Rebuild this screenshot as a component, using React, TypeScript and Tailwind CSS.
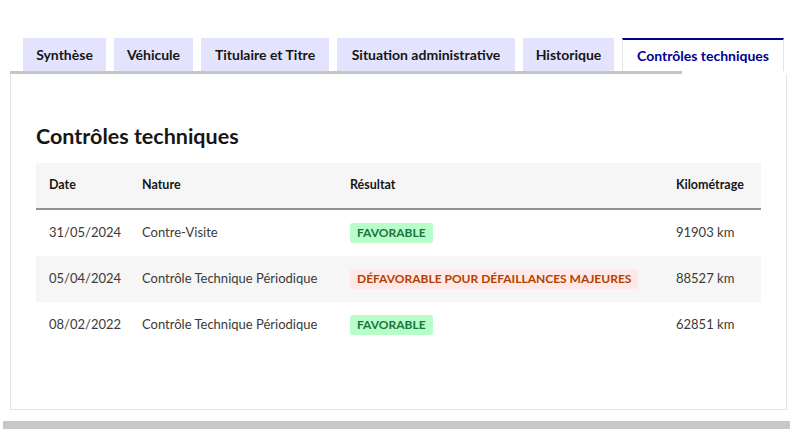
import React from 'react';

// tab labels with their fixed widths
const TABS = [
  { label: 'Synthèse', w: 'w-[83px]' },
  { label: 'Véhicule', w: 'w-[79px]' },
  { label: 'Titulaire et Titre', w: 'w-[128px]' },
  { label: 'Situation administrative', w: 'w-[178px]' },
  { label: 'Historique', w: 'w-[91px]' },
  { label: 'Contrôles techniques', w: 'w-[162px]' },
];

type Ct = { date: string; nature: string; result: string; ok: boolean; km: string };

const CONTROLES: Ct[] = [
  { date: '31/05/2024', nature: 'Contre-Visite', result: 'FAVORABLE', ok: true, km: '91903 km' },
  { date: '05/04/2024', nature: 'Contrôle Technique Périodique', result: 'DÉFAVORABLE POUR DÉFAILLANCES MAJEURES', ok: false, km: '88527 km' },
  { date: '08/02/2022', nature: 'Contrôle Technique Périodique', result: 'FAVORABLE', ok: true, km: '62851 km' },
];

const COLS = 'grid grid-cols-[93px_208px_326px_98px]';

export default function App() {
  return (
    <div className="w-[800px] h-[429px] bg-white overflow-hidden font-['Lato','Open_Sans',sans-serif] text-[#161616]">
      <div className="pt-[38px] pl-[10px] w-[787px]">
        {/* tab list */}
        <div className="flex items-end gap-2 pl-[13px] h-[33px]">
          {TABS.map((t, i) =>
            i === TABS.length - 1 ? (
              <div
                key={t.label}
                className={`${t.w} h-[33px] flex items-center justify-center bg-white border-t-2 border-[#000091] border-x border-x-[#e5e5e5] text-[14px] font-bold text-[#000091]`}
              >
                {t.label}
              </div>
            ) : (
              <div key={t.label} className={`${t.w} h-[33px] flex items-center justify-center bg-[#e3e3fd] text-[14px] font-bold text-[#161616]`}>
                {t.label}
              </div>
            )
          )}
        </div>
        <div className="h-[3px] w-[672px] bg-[#c6c6c6]" />

        {/* panel */}
        <div className="h-[336px] border border-t-0 border-[#e5e5e5] pt-[48px] px-[25px]">
          <h2 className="text-[21.5px] leading-[28px] font-bold">Contrôles techniques</h2>
          <div className="mt-[13px] w-[725px] text-[13px]">
            <div className={`${COLS} h-[47px] items-center bg-[#f6f6f6] border-b-2 border-[#929292] font-bold text-[12.5px]`}>
              <div className="pl-[13px]">Date</div>
              <div className="pl-[13px]">Nature</div>
              <div className="pl-[13px]">Résultat</div>
              <div className="pl-[13px]">Kilométrage</div>
            </div>
            {CONTROLES.map((c, i) => (
              <div key={i} className={`${COLS} h-[46px] items-center text-[#3a3a3a] ${i % 2 === 1 ? 'bg-[#f6f6f6]' : 'bg-white'}`}>
                <div className="pl-[13px]">{c.date}</div>
                <div className="pl-[13px]">{c.nature}</div>
                <div className="pl-[13px]">
                  <span
                    className={`inline-flex items-center h-[20px] px-[7px] rounded-[3px] font-bold text-[12px] ${
                      c.ok ? 'bg-[#b8fec9] text-[#18753c]' : 'bg-[#ffe9e6] text-[#b34000]'
                    }`}
                  >
                    {c.result}
                  </span>
                </div>
                <div className="pl-[13px]">{c.km}</div>
              </div>
            ))}
          </div>
        </div>
      </div>
      <div className="mt-[11px] ml-[3px] w-[787px] h-[8px] bg-[#c8c8c8]" />
    </div>
  );
}
